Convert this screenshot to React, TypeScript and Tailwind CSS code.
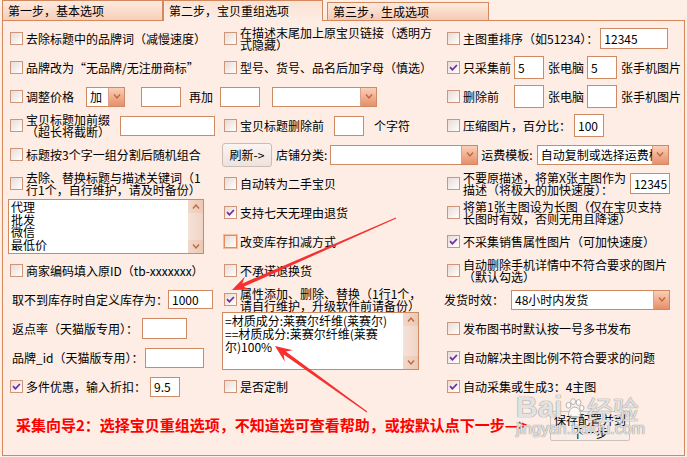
import type { ReactNode } from 'react'

const Chevron = ({ up = false }: { up?: boolean }) => (
  <svg viewBox="0 0 8 5" className="h-[5px] w-[8px]">
    <path d={up ? 'M1 4.5 L4 1 L7 4.5' : 'M1 0.5 L4 4 L7 0.5'} fill="none" stroke="#c2653a" strokeWidth="1.3" />
  </svg>
)

function Check({ on = false, hot = false }: { on?: boolean; hot?: boolean }) {
  return (
    <span
      className={
        'flex h-[13px] w-[13px] shrink-0 items-center justify-center border bg-linear-to-br from-[#e8dbd5] to-white ' +
        (hot ? 'border-[#e48b5f] outline outline-1 outline-[#f5bd9d]' : 'border-[#cf957a]')
      }
    >
      {on && (
        <svg viewBox="0 0 10 10" className="h-[9px] w-[9px]">
          <path d="M1.2 4.6 L3.8 7.6 L8.8 2.2" fill="none" stroke="#6a2c9c" strokeWidth="1.9" />
        </svg>
      )}
    </span>
  )
}

function Opt({ on, hot, two, children, className = '' }: { on?: boolean; hot?: boolean; two?: boolean; children: ReactNode; className?: string }) {
  return (
    <div className={'flex items-center gap-[3px] ' + className}>
      <Check on={on} hot={hot} />
      <span className={'whitespace-nowrap ' + (two ? 'leading-[12px]' : 'leading-[14px]')}>{children}</span>
    </div>
  )
}

function Field({ className = '', v = '' }: { className?: string; v?: string }) {
  return (
    <div className={'flex shrink-0 items-center border border-[#cf8a64] bg-white pl-[3px] leading-none ' + className}>{v}</div>
  )
}

function Drop({ className = '', v = '' }: { className?: string; v?: string }) {
  return (
    <div className={'flex h-[20px] shrink-0 border border-[#cf8a64] bg-white ' + className}>
      <span className="flex-1 overflow-hidden whitespace-nowrap pl-[3px] leading-[18px]">{v}</span>
      <span className="flex w-[16px] items-center justify-center border-l border-[#dba186] bg-linear-to-b from-[#f8cfb8] to-[#e68f69]">
        <Chevron />
      </span>
    </div>
  )
}

function Memo({ className = '', lines, lh }: { className?: string; lines: string[]; lh: string }) {
  return (
    <div className={'flex border border-[#cf8a64] bg-white ' + className}>
      <div className={'flex-1 overflow-hidden whitespace-nowrap pl-[2px] pt-[1px] ' + lh}>
        {lines.map((l) => (
          <div key={l}>{l}</div>
        ))}
      </div>
      <div className="flex w-[15px] flex-col bg-linear-to-r from-[#f5e2d8] to-[#efd4c5]">
        <div className="flex h-[13px] items-center justify-center bg-linear-to-r from-[#f2d8ca] to-[#ebc8b5]">
          <Chevron up />
        </div>
        <div className="flex-1" />
        <div className="flex h-[13px] items-center justify-center bg-linear-to-r from-[#f2d8ca] to-[#ebc8b5]">
          <Chevron />
        </div>
      </div>
    </div>
  )
}

function arrow(x1: number, y1: number, x2: number, y2: number) {
  const dx = x2 - x1
  const dy = y2 - y1
  const L = Math.hypot(dx, dy)
  const ux = dx / L
  const uy = dy / L
  const nx = -uy
  const ny = ux
  const head = 17
  const hw = 7
  const sw = 1.8
  const tw = 0.5
  const bx = x2 - ux * head
  const by = y2 - uy * head
  const nxk = x2 - ux * (head - 5)
  const nyk = y2 - uy * (head - 5)
  const pts = [
    [x1 + nx * tw, y1 + ny * tw],
    [nxk + nx * sw, nyk + ny * sw],
    [bx + nx * hw, by + ny * hw],
    [x2, y2],
    [bx - nx * hw, by - ny * hw],
    [nxk - nx * sw, nyk - ny * sw],
    [x1 - nx * tw, y1 - ny * tw],
  ]
  return pts.map((p) => p[0].toFixed(1) + ',' + p[1].toFixed(1)).join(' ')
}

export default function App() {
  return (
    <div className="relative h-[457px] w-[687px] overflow-hidden bg-[#fdeee6] font-['Noto_Sans_CJK_SC',sans-serif] text-[12px] text-black">
      {/* tabs */}
      <div className="relative z-10 -mb-px flex h-[21px] items-end pl-[2px]">
        <div className="flex h-[21px] w-[161px] items-center border border-[#d4885e] bg-linear-to-b from-[#fdeae0] to-[#f7cfb9] pl-[5px]">
          第一步，基本选项
        </div>
        <div className="flex h-[21px] w-[160px] items-center border border-b-0 border-[#d4885e] bg-linear-to-b from-[#fbe2d4] to-[#fdede4] pl-[5px]">
          第二步，宝贝重组选项
        </div>
        <div className="ml-[4px] flex h-[19px] w-[162px] items-center border border-[#d4885e] bg-linear-to-b from-[#fdeae0] to-[#f6cab2] pl-[5px]">
          第三步，生成选项
        </div>
      </div>

      {/* panel */}
      <div className="mx-[2px] flex h-[436px] flex-col border border-[#d4885e] bg-[#fdede4] pl-[7px] pt-[3px]">
        <div className="grid grid-cols-[214px_223px_1fr] grid-rows-[repeat(13,29px)]">
          {/* row 1 */}
          <Opt>去除标题中的品牌词（减慢速度）</Opt>
          <Opt two>
            在描述末尾加上原宝贝链接（透明方
            <br />
            式隐藏）
          </Opt>
          <div className="flex items-center">
            <Opt>主图重排序（如51234）：</Opt>
            <Field className="ml-[2px] h-[21px] w-[68px]" v="12345" />
          </div>

          {/* row 2 */}
          <Opt>品牌改为“无品牌/无注册商标”</Opt>
          <Opt>型号、货号、品名后加字母（慎选）</Opt>
          <div className="flex items-center">
            <Opt on>只采集前</Opt>
            <Field className="ml-[3px] h-[23px] w-[30px]" v="5" />
            <span className="ml-[4px]">张电脑</span>
            <Field className="ml-[3px] h-[23px] w-[30px]" v="5" />
            <span className="ml-[4px]">张手机图片</span>
          </div>

          {/* row 3 */}
          <div className="flex items-center">
            <Opt>调整价格</Opt>
            <Drop className="ml-[12px] w-[39px]" v="加" />
            <Field className="ml-[16px] h-[20px] w-[40px]" />
            <span className="ml-[8px]">再加</span>
          </div>
          <div className="flex items-center">
            <Field className="-ml-[4px] h-[20px] w-[40px]" />
            <Drop className="ml-[12px] w-[105px]" />
          </div>
          <div className="flex items-center">
            <Opt>删除前</Opt>
            <Field className="ml-[15px] h-[23px] w-[30px]" />
            <span className="ml-[4px]">张电脑</span>
            <Field className="ml-[3px] h-[23px] w-[30px]" />
            <span className="ml-[4px]">张手机图片</span>
          </div>

          {/* row 4 */}
          <div className="flex items-center">
            <Opt two>
              宝贝标题加前缀
              <br />
              （超长将截断）
            </Opt>
            <Field className="ml-[10px] h-[20px] w-[95px]" />
          </div>
          <div className="flex items-center">
            <Opt>宝贝标题删除前</Opt>
            <Field className="ml-[10px] h-[20px] w-[30px]" />
            <span className="ml-[10px]">个字符</span>
          </div>
          <div className="flex items-center">
            <Opt>压缩图片，百分比：</Opt>
            <Field className="ml-[3px] h-[23px] w-[30px]" v="100" />
          </div>

          {/* row 5 */}
          <Opt>标题按3个字一组分割后随机组合</Opt>
          <div className="col-span-2 flex items-center">
            <button className="-ml-[2px] flex h-[24px] w-[50px] items-center justify-center rounded-[3px] border border-[#c9bdb7] bg-linear-to-b from-[#fbf4f1] to-[#eee2dc]">
              刷新-&gt;
            </button>
            <span className="ml-[4px] whitespace-nowrap">店铺分类:</span>
            <Drop className="ml-[3px] w-[148px]" />
            <span className="ml-[3px] whitespace-nowrap">运费模板:</span>
            <Drop className="ml-[4px] w-[132px]" v="自动复制或选择运费模板" />
          </div>

          {/* row 6 */}
          <Opt two>
            去除、替换标题与描述关键词（1
            <br />
            行1个，自行维护，请及时备份）
          </Opt>
          <Opt>自动转为二手宝贝</Opt>
          <div className="flex items-center">
            <Opt two>
              不要原描述，将第X张主图作为
              <br />
              描述（将极大的加快速度）：
            </Opt>
            <Field className="ml-[4px] h-[21px] w-[40px]" v="12345" />
          </div>

          {/* row 7-8 */}
          <div className="row-span-2 flex items-start">
            <Memo className="-ml-[2px] mt-px h-[55px] w-[196px]" lh="leading-[12.6px]" lines={['代理', '批发', '微信', '最低价']} />
          </div>
          <Opt on>支持七天无理由退货</Opt>
          <Opt two>
            将第1张主图设为长图（仅在宝贝支持
            <br />
            长图时有效，否则无用且降速）
          </Opt>
          <Opt hot>改变库存扣减方式</Opt>
          <Opt on>不采集销售属性图片（可加快速度）</Opt>

          {/* row 9 */}
          <Opt>商家编码填入原ID（tb-xxxxxxx）</Opt>
          <Opt>不承诺退换货</Opt>
          <Opt two>
            自动删除手机详情中不符合要求的图片
            <br />
            （默认勾选）
          </Opt>

          {/* row 10 */}
          <div className="flex items-center">
            <span className="ml-[2px] whitespace-nowrap">取不到库存时自定义库存为：</span>
            <Field className="h-[19px] w-[45px]" v="1000" />
          </div>
          <Opt on two>
            属性添加、删除、替换（1行1个，
            <br />
            请自行维护，升级软件前请备份）
          </Opt>
          <div className="flex items-center">
            <span className="-ml-[3px] whitespace-nowrap">发货时效：</span>
            <Drop className="ml-[7px] w-[159px]" v="48小时内发货" />
          </div>

          {/* row 11-12 */}
          <div className="flex items-center">
            <span className="ml-[2px] whitespace-nowrap">返点率（天猫版专用）：</span>
            <Field className="ml-[4px] h-[21px] w-[45px]" />
          </div>
          <div className="row-span-2 flex items-start">
            <Memo
              className="-ml-[2px] -mt-[2px] h-[58px] w-[197px]"
              lh="leading-[13px]"
              lines={['=材质成分:莱赛尔纤维(莱赛尔)', '==材质成分:莱赛尔纤维(莱赛', '尔)100%']}
            />
          </div>
          <Opt>发布图书时默认按一号多书发布</Opt>
          <div className="flex items-center">
            <span className="ml-[2px] whitespace-nowrap">品牌_id（天猫版专用）：</span>
            <Field className="ml-[2px] h-[20px] w-[59px]" />
          </div>
          <Opt on>自动解决主图比例不符合要求的问题</Opt>

          {/* row 13 */}
          <div className="flex items-center">
            <Opt on>多件优惠，输入折扣：</Opt>
            <Field className="ml-[4px] h-[20px] w-[30px]" v="9.5" />
          </div>
          <Opt>是否定制</Opt>
          <Opt on>自动采集或生成3：4主图</Opt>
        </div>

        {/* footer */}
        <div className="flex h-[46px] items-center">
          <span className="ml-[6px] whitespace-nowrap text-[15px] font-bold leading-none text-[#ff0000]">
            采集向导2：选择宝贝重组选项，不知道选可查看帮助，或按默认点下一步—&gt;
          </span>
          <button className="ml-auto mr-[54px] mt-[4px] flex h-[30px] w-[80px] flex-col items-center justify-center rounded-[2px] border border-[#cdc3be] bg-[#f8ede7] leading-[13px]">
            <span>保存配置并到</span>
            <span>下一步</span>
          </button>
        </div>
      </div>

      {/* baidu watermark */}
      <div className="pointer-events-none absolute left-[516px] top-[392px] flex flex-col text-white/75 [text-shadow:0_0_1px_#8c8c8c,0_0_1px_#8c8c8c]">
        <div className="flex items-end font-['Liberation_Sans',sans-serif] leading-none">
          <span className="text-[30px] font-bold">Bai</span>
          <svg viewBox="0 0 24 24" className="mb-[3px] h-[22px] w-[22px]">
            <g fill="rgba(255,255,255,0.75)" stroke="#9a9a9a" strokeWidth="0.8">
              <ellipse cx="6" cy="9" rx="2.6" ry="3.2" />
              <ellipse cx="11" cy="5" rx="2.6" ry="3.2" />
              <ellipse cx="17" cy="6" rx="2.6" ry="3.2" />
              <ellipse cx="20.5" cy="12" rx="2.4" ry="3" />
              <path d="M6 20 C6 14 10 11 13 11 C16 11 20 15 19 20 C18 23 8 23 6 20 Z" />
            </g>
          </svg>
          <span className="ml-[2px] font-['Noto_Sans_CJK_SC',sans-serif] text-[26px]">经验</span>
        </div>
        <span className="-mt-[1px] font-['Liberation_Sans',sans-serif] text-[16px] leading-none">jingyan.baidu.com</span>
      </div>

      {/* red arrows */}
      <svg className="pointer-events-none absolute left-0 top-0 h-[457px] w-[687px]" viewBox="0 0 687 457">
        <polygon points={arrow(396, 218, 232, 290)} fill="#f5302e" />
        <polygon points={arrow(367, 412, 275, 346)} fill="#f5302e" />
      </svg>
    </div>
  )
}
